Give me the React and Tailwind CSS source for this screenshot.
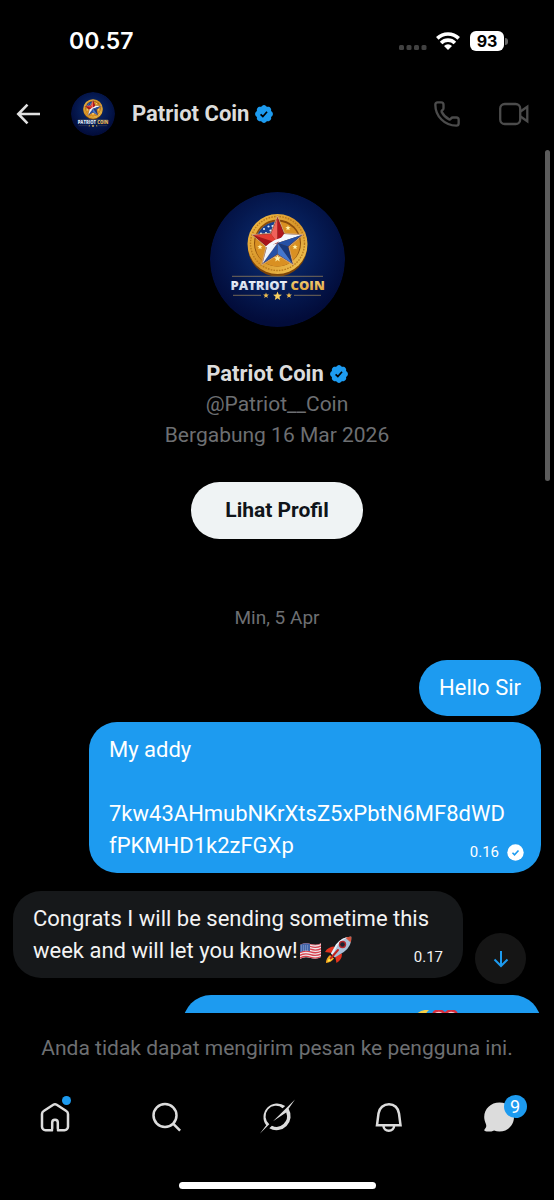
import { Phone } from "lucide-react";

const STAR_COLORS = [
  ["#f0625a", "#b0151c"],
  ["#f4f6fb", "#2550a6"],
  ["#17397f", "#4377cf"],
  ["#2550a6", "#eef2fb"],
  ["#a8141a", "#e33c32"],
];

function point(cx, cy, radius, degrees) {
  const a = (degrees * Math.PI) / 180;
  return `${(cx + radius * Math.cos(a)).toFixed(2)},${(cy + radius * Math.sin(a)).toFixed(2)}`;
}

function starPoints(cx, cy, outer, inner) {
  const pts = [];
  for (let i = 0; i < 5; i++) {
    pts.push(point(cx, cy, outer, -90 + i * 72));
    pts.push(point(cx, cy, inner, -54 + i * 72));
  }
  return pts.join(" ");
}

function CoinLogo({ className }) {
  return (
    <svg viewBox="0 0 135 135" className={className} role="img" aria-label="Patriot Coin">
      <defs>
        <radialGradient id="sky" cx="50%" cy="42%" r="55%">
          <stop offset="0" stopColor="#0d3176" />
          <stop offset="0.6" stopColor="#051a52" />
          <stop offset="1" stopColor="#020c3a" />
        </radialGradient>
        <linearGradient id="gold" x1="0" y1="0" x2="1" y2="1">
          <stop offset="0" stopColor="#f3c04a" />
          <stop offset="0.5" stopColor="#d8952a" />
          <stop offset="1" stopColor="#f7cf5d" />
        </linearGradient>
        <linearGradient id="silver" x1="0" y1="0" x2="0" y2="1">
          <stop offset="0" stopColor="#ffffff" />
          <stop offset="1" stopColor="#b9c6e0" />
        </linearGradient>
        <linearGradient id="goldText" x1="0" y1="0" x2="0" y2="1">
          <stop offset="0" stopColor="#fbe08a" />
          <stop offset="1" stopColor="#d9952a" />
        </linearGradient>
      </defs>
      <circle cx="67.5" cy="67.5" r="67.5" fill="url(#sky)" />

      {/* coin */}
      <circle cx="67.5" cy="55" r="29.5" fill="#7a4308" />
      <circle cx="67.5" cy="52" r="30" fill="url(#gold)" />
      <circle cx="67.5" cy="51.5" r="27" fill="none" stroke="#b97a1c" strokeWidth="1.4" strokeDasharray="1.6 1.2" />
      <circle cx="67.5" cy="51" r="23.5" fill="#8a4c0c" />
      <circle cx="67.5" cy="52" r="22.5" fill="#d99022" />
      <path d="M67.5 51 46.2 45.5A22.5 22.5 0 0 1 67.5 29.5z" fill="#163f8f" />
      {[[54, 37], [58.5, 34.5], [56, 41], [60.5, 38.5], [51, 41.5], [62.5, 34]].map(([x, y]) => (
        <circle key={`${x}-${y}`} cx={x} cy={y} r="1.1" fill="#dfe8fb" />
      ))}
      {[[78, 36, 2.8], [50, 55, 2.8], [85, 55, 2.8], [67.5, 66.5, 3.8]].map(([x, y, r]) => (
        <polygon key={`${x}-${y}`} points={starPoints(x, y, r, r * 0.42)} fill="#fff0a8" />
      ))}
      <polygon points={starPoints(67.5, 51, 27, 12)} fill="#6b3b22" stroke="#dcb08a" strokeWidth="0.8" />
      {STAR_COLORS.map(([left, right], i) => {
        const tip = point(67.5, 51, 25.5, -90 + i * 72);
        return (
          <g key={i}>
            <polygon points={`67.5,51 ${tip} ${point(67.5, 51, 11, -126 + i * 72)}`} fill={left} />
            <polygon points={`67.5,51 ${tip} ${point(67.5, 51, 11, -54 + i * 72)}`} fill={right} />
          </g>
        );
      })}
      <path d="M55 55q9-9 24-11l7 .5q-18 3-26 11z" fill="#f5f7fc" />

      <path d="M22 84.3h91" stroke="#a58c5c" strokeWidth="0.7" />
      <text x="20.5" y="98.3" fontFamily="Open Sans, sans-serif" fontWeight="800" fontSize="13" fill="url(#silver)">
        PATRIOT <tspan fill="url(#goldText)">COIN</tspan>
      </text>
      <path d="M23 103.3h28M84 103.3h27" stroke="#a58c5c" strokeWidth="0.7" />
      <polygon points={starPoints(56, 103.5, 3, 1.3)} fill="#f0bf4f" />
      <polygon points={starPoints(67.5, 104.2, 4.6, 2)} fill="#f8cf60" />
      <polygon points={starPoints(79, 103.5, 3, 1.3)} fill="#f0bf4f" />
    </svg>
  );
}

function Verified() {
  return (
    <svg viewBox="1.5 1.5 19 19" className="size-[18px] shrink-0" role="img" aria-label="Verified">
      <path
        fill="#1d9bf0"
        d="M20.396 11c-.018-.646-.215-1.275-.57-1.816-.354-.54-.852-.972-1.438-1.246.223-.607.27-1.264.14-1.897-.131-.634-.437-1.218-.882-1.687-.47-.445-1.053-.75-1.687-.882-.633-.13-1.29-.083-1.897.14-.273-.587-.704-1.086-1.245-1.44S11.647 1.62 11 1.604c-.646.017-1.273.213-1.813.568s-.969.854-1.24 1.44c-.608-.223-1.267-.272-1.902-.14-.635.13-1.22.436-1.69.882-.445.47-.749 1.055-.878 1.688-.13.633-.08 1.29.144 1.896-.587.274-1.087.705-1.443 1.245-.356.54-.555 1.17-.574 1.817.02.647.218 1.276.574 1.817.356.54.856.972 1.443 1.245-.224.606-.274 1.263-.144 1.896.13.634.433 1.218.877 1.688.47.443 1.054.747 1.687.878.633.132 1.29.084 1.897-.136.274.586.705 1.084 1.246 1.439.54.354 1.17.551 1.816.569.647-.016 1.276-.213 1.817-.567s.972-.854 1.245-1.44c.604.239 1.266.296 1.903.164.636-.132 1.22-.447 1.68-.907.46-.46.776-1.044.908-1.681s.075-1.299-.165-1.903c.586-.274 1.084-.705 1.439-1.246.354-.54.551-1.17.569-1.816z"
      />
      <path d="m7.4 11.3 2.4 2.3 4.4-5" fill="none" stroke="#000" strokeWidth="1.8" />
    </svg>
  );
}

function StatusBar() {
  return (
    <div className="flex h-20 shrink-0 items-center justify-between pt-[2px] pr-[46px] pl-[69px] font-['Inter',sans-serif] text-white">
      <span className="text-[23px] leading-6 font-semibold">00.57</span>
      <div className="flex items-center">
        <svg viewBox="0 0 28 20" className="mr-[9px] h-5 w-7" fill="#414141">
          <rect x="0" y="14" width="5" height="5" rx="1.5" />
          <rect x="7.5" y="14" width="5" height="5" rx="1.5" />
          <rect x="15" y="14" width="5" height="5" rx="1.5" />
          <rect x="22.5" y="14" width="5" height="5" rx="1.5" />
        </svg>
        <svg viewBox="0 0 24 18" className="mr-[10px] h-[18px] w-6" fill="none" stroke="#fff" strokeWidth="3.6">
          <path d="M1.3 6.4a15.2 15.2 0 0 1 21.4 0" />
          <path d="M5.1 11a9.700 9.700 0 0 1 13.8 0" />
          <path d="M12 18l-4-4a5.6 5.6 0 0 1 8 0z" fill="#fff" stroke="none" />
        </svg>
        <span className="flex h-5 w-[34px] items-center justify-center rounded-md bg-white text-base leading-5 font-bold text-black">
          93
        </span>
        <span className="ml-px h-[7px] w-[3px] rounded-r-full bg-[#666]" />
      </div>
    </div>
  );
}

function ChatHeader() {
  return (
    <header className="flex h-[68px] shrink-0 items-center pr-[25px] pl-4">
      <button aria-label="Back">
        <svg viewBox="0 0 24 24" className="size-6" fill="none" stroke="#e1e1e1" strokeWidth="2.6">
          <path d="M24 12H2.5M11.500 2.700 2.300 12l9.200 9.300" />
        </svg>
      </button>
      <CoinLogo className="ml-[31px] size-11 rounded-full" />
      <h1 className="ml-[17px] text-[22px] leading-8 font-bold text-[#dcdcdc]">Patriot Coin</h1>
      <span className="ml-[6px]">
        <Verified />
      </span>
      <div className="ml-auto flex items-center gap-[38px]">
        <button aria-label="Voice call">
          <Phone className="size-7 text-[#4b4b4b]" strokeWidth={2} />
        </button>
        <button aria-label="Video call">
          <svg viewBox="0 0 30 24" className="h-6 w-[30px]" fill="none" stroke="#4b4b4b" strokeWidth="2.3">
            <rect x="1.2" y="2" width="20" height="20" rx="4.5" />
            <path d="m21.5 9.500 6.800-4.800v14.600l-6.800-4.800" />
          </svg>
        </button>
      </div>
    </header>
  );
}

function Flag() {
  return (
    <svg viewBox="0 0 22 20" className="ml-px inline-block h-5 w-[23px] align-[-3px]" role="img" aria-label="United States flag">
      <clipPath id="wave">
        <path d="M.5 4Q5 1 11 3t10.500-.8V16q-4.500 3-10.500 1T.5 18z" />
      </clipPath>
      <g clipPath="url(#wave)">
        <path d="M0 0h22v20H0z" fill="#f0e6e8" />
        <path
          d="M0 3.800q5-3 11-1t11-.8M0 6.500q5-3 11-1t11-.8M0 9.200q5-3 11-1t11-.8M0 11.900q5-3 11-1t11-.8M0 14.600q5-3 11-1t11-.8M0 17.300q5-3 11-1t11-.8"
          fill="none"
          stroke="#d8424f"
          strokeWidth="1.3"
        />
        <path d="M0 1h10.500v9.200Q5 8.500 0 11.500z" fill="#4465a8" />
        <path d="M1.500 5h8M1.500 7h8M1.500 9h8" stroke="#b9c8e6" strokeWidth="0.8" strokeDasharray="0.9 1.1" />
      </g>
    </svg>
  );
}

function Rocket() {
  return (
    <svg viewBox="0 0 28 28" className="ml-[2px] inline-block size-7 align-[-6px]" role="img" aria-label="Rocket">
      <path d="M11 10.500Q4 10.500 1 16l7 1zM18 17.500Q18 24 12.500 27L11 20z" fill="#e2331f" />
      <path d="M6 19Q2 22 2 27q5-.5 8-4.500z" fill="#f7a31c" />
      <path d="M6.500 20.500Q4 23 3.500 26q3-.8 5-3z" fill="#fff04a" />
      <path d="M27.300.7Q18 .5 12 8.500L7 17.500l3.800 4 9-5.500Q28 10 27.300.7z" fill="#a9bfd8" />
      <path d="M27.300.7Q19 2 13.500 9.500L8.500 19 7 17.500l5-9Q18 .5 27.300.7z" fill="#e9f0f8" />
      <path d="M27.300.7q.2 3-.7 5.800L21.500 1.700Q24 .6 27.300.7z" fill="#d4543e" />
      <circle cx="18.500" cy="8.500" r="3.700" fill="#b3262b" />
      <circle cx="18.500" cy="8.500" r="2.300" fill="#1b2233" />
      <path d="m14 14-7.500 8.500" stroke="#c3241b" strokeWidth="2" strokeLinecap="round" />
    </svg>
  );
}

function Messages() {
  return (
    <div className="flex flex-col px-[13px] text-[22px] leading-8">
      <div className="self-end rounded-[28px] bg-[#1d9bf0] px-5 py-3 text-white">Hello Sir</div>

      <div className="relative mt-[6px] w-[452px] max-w-full self-end rounded-[28px] bg-[#1d9bf0] px-5 pt-3 pb-[11px] text-white">
        <p>My addy</p>
        <p className="mt-8">
          7kw43AHmubNKrXtsZ5xPbtN6MF8dWD
          <br />
          fPKMHD1k2zFGXp
        </p>
        <div className="absolute right-[17px] bottom-[11px] flex items-center gap-2 text-[15px] leading-5">
          <time>0.16</time>
          <svg viewBox="0 0 17 17" className="size-[17px]" role="img" aria-label="Sent">
            <circle cx="8.500" cy="8.500" r="8.200" fill="#fff" />
            <path d="m5.500 8.800 2 2 4-4.300" fill="none" stroke="#1d9bf0" strokeWidth="1.600" />
          </svg>
        </div>
      </div>

      <div className="relative mt-[18px] w-[450px] max-w-full rounded-[28px] bg-[#16181a] px-5 pt-3 pb-[11px] text-[#f3f3f3]">
        <p>
          Congrats I will be sending sometime this
          <br />
          week and will let you know!
          <Flag />
          <Rocket />
        </p>
        <time className="absolute right-5 bottom-[11px] text-[15px] leading-5">0.17</time>
      </div>

      <div className="mt-[17px] flex h-14 w-[358px] max-w-full justify-end self-end rounded-[28px] bg-[#1d9bf0] pt-[15px] pr-[83px]">
        <svg viewBox="0 0 46 26" className="h-[26px] w-[46px]" aria-hidden="true">
          <path d="M3 6Q8-1 17 0q-4 3-4 8v14H6z" fill="#f7cf46" />
          <path d="M33 24 23 11Q19 3 24 1q5-2 9 3 4-5 9-3 5 2 1 10z" fill="#f3c9d2" stroke="#d92f3f" strokeWidth="2.500" />
        </svg>
      </div>
    </div>
  );
}

function TabBar() {
  return (
    <nav className="mt-[25px] grid h-14 grid-cols-5 items-center justify-items-center">
      <a href="#home" aria-label="Home" className="relative">
        <svg viewBox="0 0 32 32" className="size-8" fill="none" stroke="#dcdcdc" strokeWidth="2.500" strokeLinejoin="round">
          <path d="M13.200 29.200H6.500a3.500 3.500 0 0 1-3.500-3.500V13a3.500 3.500 0 0 1 1.700-3L14.300 3.800a3.200 3.200 0 0 1 3.400 0L27.300 10a3.500 3.500 0 0 1 1.700 3v12.700a3.500 3.500 0 0 1-3.500 3.500h-6.700V21.500a2.800 2.800 0 0 0-5.600 0z" />
          <path d="M14.500 29.500h3" stroke="#000" strokeWidth="3.500" />
        </svg>
        <span className="absolute -top-[5px] right-0 size-[9px] rounded-full bg-[#1d9bf0]" />
      </a>
      <a href="#search" aria-label="Search">
        <svg viewBox="0 0 32 32" className="size-8" fill="none" stroke="#dcdcdc" strokeWidth="2.500">
          <circle cx="15" cy="14.500" r="11.500" />
          <path d="m23.100 22.600 7 7" />
        </svg>
      </a>
      <a href="#grok" aria-label="Grok">
        <svg viewBox="0 0 36 36" className="size-9" fill="#dcdcdc">
          <path d="M26.200 7A13.700 13.700 0 0 0 7.200 26.300L1 34.500l9.300-9.300A10.400 10.400 0 0 1 23.600 9.200z" />
          <path d="M14 22.300 36 .5l-6.400 9.200A14.200 14.200 0 0 1 10.300 29.300l2.600-2.600A10.400 10.400 0 0 0 27.200 13.600z" />
        </svg>
      </a>
      <a href="#notifications" aria-label="Notifications">
        <svg viewBox="0 0 32 32" className="size-8" fill="none" stroke="#dcdcdc" strokeWidth="2.500">
          <path d="M5 24.200 6.500 12.500C7.200 7 11.700 3.200 17 3.200S26.300 7 27 12.500l1.500 11.700z" />
          <path d="M11.500 24.800a5.300 5 0 0 0 10.600 0" />
        </svg>
      </a>
      <a href="#messages" aria-label="Messages, 9 unread" className="relative">
        <svg viewBox="0 0 32 32" className="size-8" fill="#dcdcdc">
          <path d="M16.500 1.500C25 1.500 31 7.700 31 15.800c0 8.300-6 14.700-14.500 14.700-2 0-3.800-.4-5.400-1.100-2.700 1.200-6.500 1.700-9.200.6-.8-.4-.9-1.200-.2-1.800 1.600-1.500 1.900-3.200 1.200-5.300C2 20.800 1.200 18.500 1.200 16 1.200 7.800 7.800 1.500 16.500 1.500z" />
        </svg>
        <span className="absolute -top-[6px] -right-3 flex size-[23px] items-center justify-center rounded-full bg-[#1d9bf0] text-lg leading-5 text-white">
          9
        </span>
      </a>
    </nav>
  );
}

export default function App() {
  return (
    <div className="flex h-screen flex-col overflow-hidden bg-black font-['Roboto',sans-serif]">
      <StatusBar />
      <ChatHeader />

      <main className="relative min-h-0 flex-1 overflow-hidden">
        <section className="flex flex-col items-center pt-11 text-[21px] leading-[31px] text-[#6d6f72]">
          <CoinLogo className="size-[135px] rounded-full" />
          <h2 className="mt-[31px] flex items-center gap-[6px] text-[22px] font-bold text-[#dcdcdc]">
            Patriot Coin <Verified />
          </h2>
          <p>@Patriot__Coin</p>
          <p>Bergabung 16 Mar 2026</p>
          <button className="mt-[31px] h-[57px] rounded-full bg-[#eff3f4] px-[34px] font-bold text-[#0f1419]">
            Lihat Profil
          </button>
          <p className="mt-[67px] mb-[30px] text-[19px] leading-6">Min, 5 Apr</p>
        </section>

        <Messages />

        <button
          aria-label="Scroll to latest"
          className="absolute right-7 bottom-[29px] flex size-[51px] items-center justify-center rounded-full bg-[#151515]"
        >
          <svg viewBox="0 0 16 18" className="h-[18px] w-4" fill="none" stroke="#1d9bf0" strokeWidth="2">
            <path d="M8 1v14.500M1.500 9.500 8 16l6.500-6.500" />
          </svg>
        </button>
        <div className="absolute top-[2px] right-1 h-[331px] w-[5px] rounded-full bg-[#5c5c5c]" />
      </main>

      <footer className="shrink-0 bg-black pt-[19px] pb-[11px]">
        <p className="text-center text-[21px] leading-8 text-[#6d6f72]">
          Anda tidak dapat mengirim pesan ke pengguna ini.
        </p>
        <TabBar />
        <div className="mx-auto mt-[37px] h-[7px] w-[197px] rounded-full bg-white" />
      </footer>
    </div>
  );
}
